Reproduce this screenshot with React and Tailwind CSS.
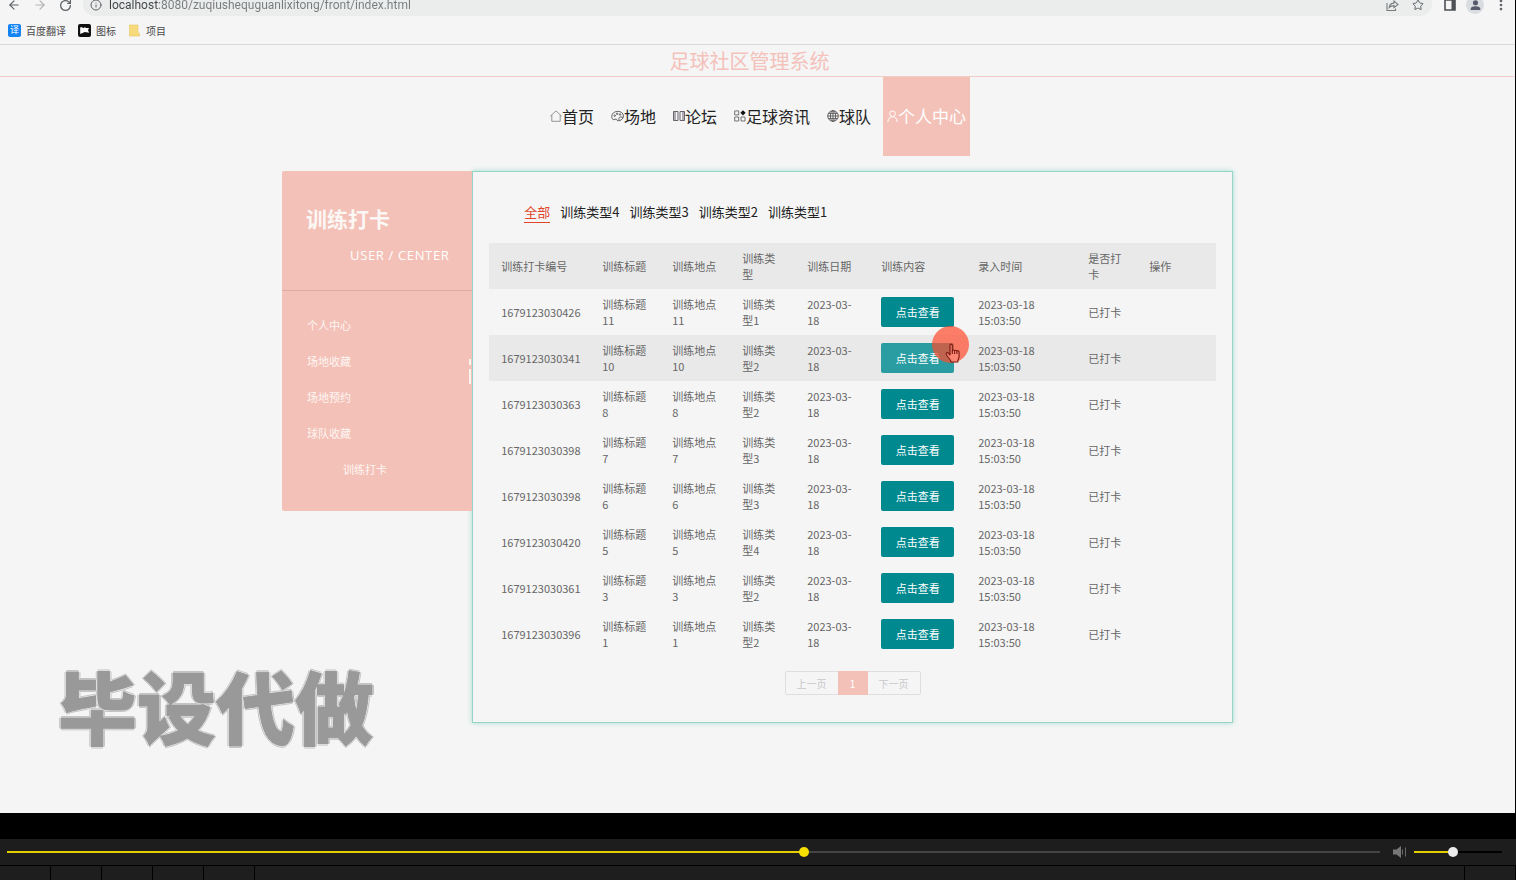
import React from 'react';
import { ArrowLeft, ArrowRight, RotateCw, Info, Star, MoreVertical } from 'lucide-react';

const rows = [
  ['1679123030426', '11', '1'],
  ['1679123030341', '10', '2'],
  ['1679123030363', '8', '2'],
  ['1679123030398', '7', '3'],
  ['1679123030398', '6', '3'],
  ['1679123030420', '5', '4'],
  ['1679123030361', '3', '2'],
  ['1679123030396', '1', '2'],
];

const headings = ['训练打卡编号', '训练标题', '训练地点', '训练类型', '训练日期', '训练内容', '录入时间', '是否打卡', '操作'];

function HomeIcon() {
  return (
    <svg viewBox="0 0 12 12" className="size-3" fill="none" stroke="#8a8a8a" strokeWidth="0.9">
      <path d="M0.3 6.2 6 0.9l5.7 5.3M1.8 5v6.3h8.4V5" />
    </svg>
  );
}

function PaletteIcon() {
  return (
    <svg viewBox="0 0 14 12" className="h-3 w-[13px]" fill="none" stroke="#444" strokeWidth="0.9">
      <path d="M7.200 1C3.500 1 0.800 3.400 0.800 6.600c0 2 1 3.400 2.300 3.400 1.200 0 1.300-1 2.300-.8 1.200.3.600 2 2.200 2 3 0 5.800-2.200 5.800-5.400C13.400 3 10.700 1 7.200 1z" />
      <path d="M9.200 10.600c-1.700-1.600-.4-3.700 1.600-3.600 1.200.1 1.700.6 2.400.7" />
      <circle cx="4" cy="5.600" r="0.800" /><circle cx="6.600" cy="3.600" r="0.800" /><circle cx="9.800" cy="4.400" r="0.800" />
    </svg>
  );
}

function ColumnsIcon() {
  return (
    <svg viewBox="0 0 12 12" className="size-3" fill="none" stroke="#5c5560" strokeWidth="0.9">
      <path d="M0.500 1.500h1.500v9H0.500zM2 1.500h3v9H2M7 1.500h3v9H7zM10 1.500h1.500v9H10" />
    </svg>
  );
}

function TilesIcon() {
  return (
    <svg viewBox="0 0 12 12" className="size-3" fill="none" stroke="#666" strokeWidth="0.9">
      <path d="M0.7 0.9h4v4h-4zM0.7 7h4v4h-4zM7 7h4v4H7z" />
      <path d="M9 0.2 11.6 2.8 9 5.4 6.4 2.8z" fill="#111" stroke="none" />
    </svg>
  );
}

function GlobeIcon() {
  return (
    <svg viewBox="0 0 12 12" className="size-3" fill="none" stroke="#555" strokeWidth="0.9">
      <circle cx="6" cy="6" r="5.300" />
      <ellipse cx="6" cy="6" rx="2.600" ry="5.300" />
      <path d="M0.700 6h10.600M6 0.700v10.600M1.500 3.400h9M1.500 8.600h9" />
    </svg>
  );
}

function PersonIcon() {
  return (
    <svg viewBox="0 0 11 12" className="h-3 w-[11px]" fill="none" stroke="#fff" strokeWidth="1">
      <circle cx="5.5" cy="3.7" r="2.8" />
      <path d="M0.9 12c0-3.2 1.8-5.3 4.6-5.3s4.6 2.1 4.6 5.3" />
    </svg>
  );
}

const nav = [
  ['首页', <HomeIcon />],
  ['场地', <PaletteIcon />],
  ['论坛', <ColumnsIcon />],
  ['足球资讯', <TilesIcon />],
  ['球队', <GlobeIcon />],
];

function BrowserBar() {
  return (
    <header className="overflow-hidden border-b border-[#d6d9da] text-[#5f6368]">
      <div className="-mt-[6px] flex h-[22px] items-center">
        <div className="flex w-[83px] items-center gap-3 pl-[7px]">
          <button aria-label="后退"><ArrowLeft className="size-[14px]" /></button>
          <button aria-label="前进"><ArrowRight className="size-[14px] text-[#b0b2b4]" /></button>
          <button aria-label="刷新"><RotateCw className="size-[13px]" strokeWidth={2.4} /></button>
        </div>
        <div className="flex h-full flex-1 items-center rounded-b-xl bg-[#ebeded] pr-2 pl-[7px]">
          <Info className="size-3" />
          <input
            aria-label="地址"
            readOnly
            value="localhost:8080/zuqiushequguanlixitong/front/index.html"
            className="ml-[7px] h-[22px] min-w-0 flex-1 bg-[linear-gradient(90deg,#3f4245_50px,#777b7e_50px)] bg-clip-text font-[Roboto,sans-serif] text-[12px] text-transparent outline-none"
          />
          <button aria-label="分享" className="mr-[13px]">
            <svg viewBox="0 0 13 13" className="size-[13px]" fill="none" stroke="#777b7e" strokeWidth="1.1">
              <path d="M1 4v7.5h8.5V9.5M3.2 8.5C3.6 5.6 5.3 4.2 8 4.1V2l4 3.4-4 3.3V6.6C5.900 6.600 4.400 7.200 3.200 8.500z" />
            </svg>
          </button>
          <button aria-label="收藏"><Star className="size-3" /></button>
        </div>
        <div className="flex items-center gap-[11px] pr-[7px] pl-3">
          <button aria-label="侧边栏">
            <svg viewBox="0 0 12 12" className="size-3" fill="none" stroke="#4d5156" strokeWidth="1.6">
              <path d="M1 1h10v10H1z" /><path d="M7.500 1h3.500v10H7.500z" fill="#4d5156" stroke="none" />
            </svg>
          </button>
          <button aria-label="用户" className="-mx-px flex size-[18px] justify-center overflow-hidden rounded-full bg-[#d9dce1] pt-1">
            <svg viewBox="0 0 12 12" className="size-[11px]" fill="#565c6b">
              <circle cx="6" cy="3" r="2.800" /><path d="M0.800 11V9.500C0.800 7.500 3.800 6.800 6 6.800s5.200.7 5.200 2.700V11z" />
            </svg>
          </button>
          <button aria-label="更多"><MoreVertical className="size-[14px]" strokeWidth={2.6} /></button>
        </div>
      </div>
      <nav className="flex h-7 items-center gap-3 pl-2 text-[10px] text-[#4a4a4a]">
        <a href="#fanyi" className="flex items-center gap-[5px]">
          <span className="flex size-[13px] items-center justify-center rounded-xs bg-[#1283f5] text-[9px] text-white">译</span>百度翻译
        </a>
        <a href="#icons" className="flex items-center gap-[5px]">
          <svg viewBox="0 0 13 13" className="size-[13px]">
            <rect width="13" height="13" rx="2" fill="#111" />
            <path d="M2.200 10V3.300h2l1 1 1.600-1 1.400.8H11L10 6.300l1.200 2.500-4.400-.7z" fill="#fff" />
          </svg>图标
        </a>
        <a href="#projects" className="flex items-center gap-[5px]">
          <svg viewBox="0 0 13 13" className="size-[13px]">
            <path d="M1.500 1h8.500v8l1.500.5V12h-10z" fill="#f7da7b" stroke="#e9c75b" strokeWidth="0.600" />
          </svg>项目
        </a>
      </nav>
    </header>
  );
}

function Pointer() {
  return (
    <span className="pointer-events-none absolute -top-[17px] left-[51px] z-10 size-[37px] rounded-full bg-[#ff4b2c]/70">
      <svg viewBox="0 0 16 20" className="absolute top-[17px] left-[13px] h-5 w-4" fill="#fb8674" stroke="#7a1a10" strokeWidth="1.100" strokeLinejoin="round">
        <path d="M5 12V2.500c0-1.800 2.300-1.800 2.300 0V8c0-1.400 2.300-1.400 2.300.2 0-1.300 2.300-1.200 2.300.4 0-1.100 2.200-1 2.200.6v4.300c0 1.800-1.300 2.600-1.300 5.500H6.200C5.600 16.500 2.600 13.900 1.300 11.400c-.7-1.500 1-2.300 2-1.200z" />
        <path d="M7.300 8v3M9.600 8.500V11M11.900 9v2" fill="none" />
      </svg>
    </span>
  );
}

function Sidebar() {
  return (
    <aside className="relative w-1/5 shrink-0 self-start rounded-l-xs bg-[#f4c1b8] text-white">
      <div className="h-[120px] border-b border-[#dfaaa3] pt-[31px] pl-6">
        <h2 className="text-[21px] leading-8 font-bold text-[#fbf7f4]">训练打卡</h2>
        <p className="mt-2 pl-11 font-['Open_Sans',sans-serif] text-[13px] leading-[26px] tracking-wider">USER / CENTER</p>
      </div>
      <ul className="pt-4 pb-6 pl-[25px] text-[11px] leading-9 text-[#fdf6f2]">
        {['个人中心', '场地收藏', '场地预约', '球队收藏'].map((t) => (
          <li key={t}><a href="#menu">{t}</a></li>
        ))}
        <li className="pl-9"><a href="#checkin">训练打卡</a></li>
      </ul>
      <span className="absolute top-[188px] right-px h-[6px] w-[2px] bg-[#fdf3ef]" />
      <span className="absolute top-[198px] right-px h-[15px] w-[2px] bg-[#fdf3ef]" />
    </aside>
  );
}

function Records() {
  return (
    <table className="w-full table-fixed text-left text-[11px] leading-4 text-[#666]">
      <colgroup>
        <col className="w-[101px]" /><col className="w-[70px]" /><col className="w-[70px]" />
        <col className="w-[65px]" /><col className="w-[74px]" /><col className="w-[97px]" />
        <col className="w-[110px]" /><col className="w-[61px]" /><col />
      </colgroup>
      <thead>
        <tr className="h-[46px] bg-[#e9e9e9]">
          {headings.map((h) => <th key={h} className="px-3 font-normal">{h}</th>)}
        </tr>
      </thead>
      <tbody>
        {rows.map(([id, n, type], i) => (
          <tr key={n} className={i === 1 ? 'h-[46px] bg-[#e9e9e9]' : 'h-[46px]'}>
            <td className="pl-3 whitespace-nowrap">{id}</td>
            <td className="px-3 break-all">训练标题{n}</td>
            <td className="px-3 break-all">训练地点{n}</td>
            <td className="px-3 break-all">训练类型{type}</td>
            <td className="px-3 break-all">2023-03-18</td>
            <td className="px-3">
              <div className="relative">
                <button className={i === 1 ? 'block h-[30px] w-full rounded-xs bg-[#2a9da2] text-white' : 'block h-[30px] w-full rounded-xs bg-[#018990] text-white'}>
                  点击查看
                </button>
                {i === 1 && <Pointer />}
              </div>
            </td>
            <td className="px-3">2023-03-18 15:03:50</td>
            <td className="px-3">已打卡</td>
            <td />
          </tr>
        ))}
      </tbody>
    </table>
  );
}

function Player() {
  const cells = [0, 1, 2, 3, 4];
  return (
    <footer className="bg-black pt-[26px]">
      <div className="flex h-[26px] items-center bg-[#1d1d1d] pr-[14px] pl-[7px]">
        <input
          type="range" aria-label="播放进度" min="0" max="1000" defaultValue="581"
          className="h-3 min-w-0 flex-1 appearance-none bg-transparent [&::-webkit-slider-runnable-track]:h-[2px] [&::-webkit-slider-runnable-track]:bg-[linear-gradient(90deg,#e5cf00_58%,#444_58%)] [&::-webkit-slider-thumb]:-mt-[4px] [&::-webkit-slider-thumb]:size-[10px] [&::-webkit-slider-thumb]:appearance-none [&::-webkit-slider-thumb]:rounded-full [&::-webkit-slider-thumb]:bg-[#f7e000]"
        />
        <button aria-label="音量" className="mr-[7px] ml-3">
          <svg viewBox="0 0 15 14" className="h-[14px] w-[15px]" fill="#777">
            <path d="M1 4.500h3.500L9 1v12L4.500 9.500H1z" />
            <path d="M10.500 4.500v5M13.500 2.500v9" stroke="#666" strokeWidth="1" />
          </svg>
        </button>
        <input
          type="range" aria-label="音量大小" min="0" max="100" defaultValue="44"
          className="h-3 w-[88px] appearance-none bg-transparent [&::-webkit-slider-runnable-track]:h-[2px] [&::-webkit-slider-runnable-track]:bg-[linear-gradient(90deg,#e5cf00_44%,#000_44%)] [&::-webkit-slider-thumb]:-mt-[4px] [&::-webkit-slider-thumb]:size-[10px] [&::-webkit-slider-thumb]:appearance-none [&::-webkit-slider-thumb]:rounded-full [&::-webkit-slider-thumb]:bg-[#ececec]"
        />
      </div>
      <div className="mt-px flex h-[14px] bg-[#1e1e1e]">
        {cells.map((c) => <div key={c} className="w-[51px] border-r border-black" />)}
        <div className="flex-1 border-r border-black" />
        <div className="w-[51px] border-r border-black" />
      </div>
    </footer>
  );
}

export default function App() {
  return (
    <div className="flex min-h-screen flex-col bg-black font-['Noto_Sans_CJK_SC',sans-serif]">
      <div className="relative mr-px flex-1 bg-[#f5f5f5]">
        <BrowserBar />
        <h1 className="h-8 border-b border-[#f0cdc8] text-center text-[20px] leading-8 text-[#f4c1bb]">
          <span className="pr-4">足球社区管理系统</span>
        </h1>
        <nav className="flex h-[79px] items-stretch justify-center gap-[7px] text-[16px] text-[#222]">
          {nav.map(([label, icon]) => (
            <a key={label} href="#nav" className="flex items-center px-[5px] pb-[2px]">{icon}{label}</a>
          ))}
          <a href="#me" className="flex items-center bg-[#f4c1b8] px-1 pb-[2px] text-[17px] text-white">
            <PersonIcon />个人中心
          </a>
        </nav>
        <div className="mx-auto mt-[15px] flex w-full max-w-[951px]">
          <Sidebar />
          <main className="min-w-0 flex-1 border border-[#95d5c7] px-4 pt-[30px] pb-[27px] shadow-[0_0_5px_#a5dccf]">
            <div className="mb-5 flex gap-[10px] pl-[35px] text-[13px] leading-5 text-[#222]">
              <button className="border-b border-[#e2452b] text-[#e2452b]">全部</button>
              {[4, 3, 2, 1].map((n) => <button key={n} className="border-b border-transparent">训练类型{n}</button>)}
            </div>
            <Records />
            <div className="mt-[14px] flex justify-center text-[10px] text-[#c8c8cc]">
              <div className="flex h-6 rounded-xs border border-[#dedede]">
                <button className="px-[11px]">上一页</button>
                <button className="-my-px w-[30px] bg-[#f4c1b8] text-white">1</button>
                <button className="px-[11px]">下一页</button>
              </div>
            </div>
          </main>
        </div>
        <div className="pointer-events-none absolute bottom-[54px] left-[58px] text-[79px] leading-[108px] font-black text-[#999] [text-shadow:1px_0_#eee,-1px_0_#eee,0_1px_#eee,0_-1px_#eee,2px_0_#c4c4c4,-2px_0_#c4c4c4,0_2px_#c4c4c4,0_-2px_#c4c4c4] [-webkit-text-stroke:1px_#999]">
          毕设代做
        </div>
      </div>
      <Player />
    </div>
  );
}
